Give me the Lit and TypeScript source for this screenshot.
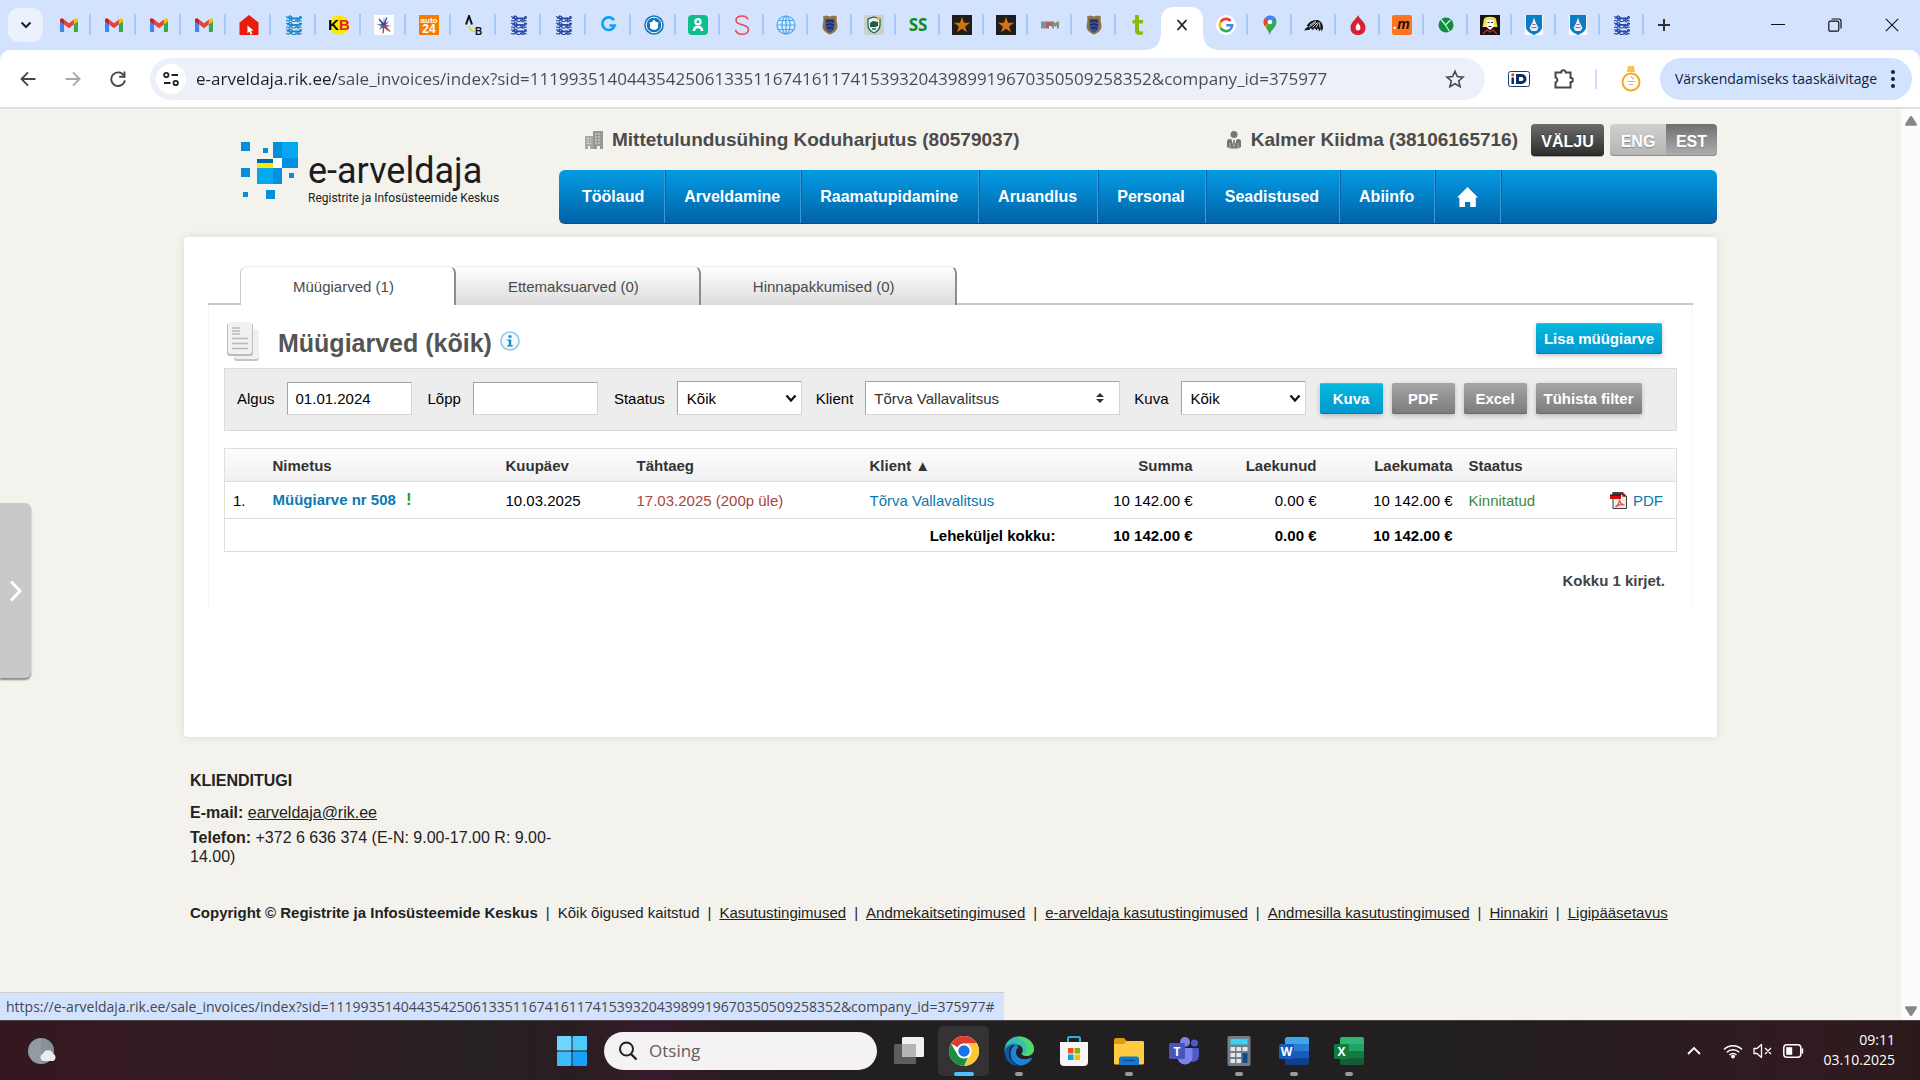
import { LitElement, html, svg, css, TemplateResult, SVGTemplateResult } from "lit";
import { customElement, state } from "lit/decorators.js";
import { classMap } from "lit/directives/class-map.js";

const SESSION_PATH =
  "e-arveldaja.rik.ee/sale_invoices/index?sid=1119935140443542506133511674161174153932043989919670350509258352&company_id=375977";

/* ---------- tab strip icons, all on a 20 x 20 grid ---------- */

const gmail = svg`
  <path d="M1 5v11.2c0 .5.4.8.9.8h3.2V8.6z" fill="#4285f4"/>
  <path d="M19 5v11.2c0 .5-.4.8-.9.8h-3.2V8.6z" fill="#34a853"/>
  <path d="M14.9 4.6v4.9L19 6.4V4.9c0-1.8-2-2.3-3.3-1z" fill="#fbbc04"/>
  <path d="M5.1 9.500V4.600L10 8.300l4.900-3.700v4.900L10 13.200z" fill="#ea4335"/>
  <path d="M1 4.900v1.500l4.100 3.100V4.600l-.8-.7C3 2.600 1 3.100 1 4.900z" fill="#c5221f"/>`;

const lion = (y: number, color: string) => svg`
  <path d="M2 ${y - 1}l2.500 1 1-1.500 2 .5.500 1.500h5l2 .5 1.500-2 1.500 1M3 ${y + 1}l3-.5 2 .8 4-.3 3 .5 2.500-1M2 ${y + 3}l3 .5 1.500-1.500 2 2h2.500l1-1.500 2 1.800 1.500-1.500 2 .5"
    fill="none" stroke="${color}" stroke-width="1.200"/>
  <path d="M5 ${y - 1}l1.500 3.500M8.500 ${y}l-1 2.500M13 ${y}l1 3M16 ${y - 1}l-1 3" stroke="${color}" stroke-width="1.200"/>`;
const lions = (color: string) => svg`${lion(2.5, color)}${lion(9, color)}${lion(15.5, color)}`;

const crest = svg`
  <path d="M3 1.500l3.500-1L10 1.500l3.500-1 3.500 1-.5 3.500 1 6c0 5-4 7-7.500 8.500C6.500 18 2.500 16 2.500 11l1-6z" fill="#8f7448"/>
  <path d="M5.500 4h9v8c0 3-2 4.500-4.500 5.500-2.500-1-4.500-2.500-4.500-5.500z" fill="#39518f"/>
  <path d="M6 6.500l4-1 4 1M6 10l4-1 4 1M7 13.500l3-1 3 1" stroke="#1d2c5c" stroke-width="1.400" fill="none"/>`;

const goldStar = svg`
  <rect width="20" height="20" fill="#1f1d1b"/>
  <path d="M10 2l2 5.800h6l-4.900 3.600 1.900 5.900-5-3.600-5 3.600 1.900-5.900L2 7.800h6z" fill="#d4720f"/>`;

const blueShield = svg`
  <rect x="1" width="18" height="20" fill="#fff"/>
  <path d="M2 0h16v12c0 4-4 6-8 8-4-2-8-4-8-8z" fill="#0a7cc4"/>
  <path d="M10 2.500l1.500 4.500 3 6-2 3h-5l-2-3 3-6z" fill="#e3eef5"/>
  <path d="M8.500 9.500h3M7.500 12.500h5" stroke="#b05c5c" stroke-width="1"/>`;

const favicons: { label: string; art: SVGTemplateResult }[] = [
  { label: "Gmail", art: gmail },
  { label: "Gmail", art: gmail },
  { label: "Gmail", art: gmail },
  { label: "Gmail", art: gmail },
  {
    label: "Kinnisvara",
    art: svg`<path d="M10 0l9.500 7.500V20H.5V7.500z" fill="#ea1c0a"/><path d="M8.500 10.500l6 5-2.600.3 1.500 3.200-1.600.8-1.500-3.300-1.800 1.800z" fill="#fff"/>`,
  },
  { label: "Riik", art: lions("#1687c8") },
  {
    label: "KB",
    art: svg`<circle cx="10" cy="10" r="9.800" fill="#ffe800"/><text x="-1" y="15" font-size="15" font-weight="700" font-family="Liberation Sans, sans-serif" fill="#000">K</text><text x="10" y="15" font-size="15" font-weight="700" font-family="Liberation Sans, sans-serif" fill="#e2231a">B</text>`,
  },
  {
    label: "Täht",
    art: svg`<rect width="20" height="20" fill="#fff"/><path d="M10 1.500l.8 7 4.200-2.500-3 4 5.500 1-5.500.8 2 4.700-3.700-3.800L9 18.500l-.3-6L5 15l2.300-4L2.500 9.500l5.300-.4L5 4.500l4.300 3.700z" fill="#5a5c86"/><path d="M5 4l5 6 2.800-7.500" fill="none" stroke="#1b3f90" stroke-width="1.200"/><path d="M10 10l-1 8.500M10 10l6 6.500" stroke="#c8344c" stroke-width="1.200"/>`,
  },
  {
    label: "auto24",
    art: svg`<rect width="20" height="20" fill="#f57c00"/><text x="10" y="7.500" font-size="8" font-weight="700" text-anchor="middle" font-family="Liberation Sans, sans-serif" fill="#fff">auto</text><text x="10" y="17.500" font-size="12" font-weight="700" text-anchor="middle" font-family="Liberation Sans, sans-serif" fill="#fff">24</text>`,
  },
  {
    label: "AB",
    art: svg`<path d="M2 9.500L5 1l3 8.500" fill="none" stroke="#111" stroke-width="2"/><path d="M5 11c1 4 3 5 6 5.500" fill="none" stroke="#d6dc2c" stroke-width="1.600"/><text x="11" y="19.500" font-size="10" font-weight="700" font-family="Liberation Sans, sans-serif" fill="#111">B</text>`,
  },
  { label: "Riik", art: lions("#2748a8") },
  { label: "Riik", art: lions("#2748a8") },
  {
    label: "G",
    art: svg`<path d="M15 5.300A6.300 6.300 0 1 0 15.700 10.500H10.500" fill="none" stroke="#12a0f2" stroke-width="2.600"/>`,
  },
  {
    label: "Teenus",
    art: svg`<circle cx="10" cy="10" r="9.800" fill="#1176bc"/><circle cx="10" cy="10" r="7.800" fill="none" stroke="#fff" stroke-width="1"/><path d="M10 4.500l1.800 2.200 2.700.8-.6 2.800.3 2.700-2.700 1.800h-3l-2.700-1.800.3-2.700-.6-2.800 2.700-.8z" fill="#fff"/>`,
  },
  {
    label: "Profiil",
    art: svg`<rect width="20" height="20" rx="4" fill="#0bbf8c"/><circle cx="10" cy="6.800" r="2.600" fill="none" stroke="#fff" stroke-width="2.200"/><path d="M6 16c0-2.600 1.700-4 4-4s4 1.400 4 4" fill="none" stroke="#fff" stroke-width="2.600"/>`,
  },
  {
    label: "S",
    art: svg`<path d="M16 4.500C15 2 12.500 1 10 1 6.500 1 4 2.800 4 5.500c0 5.500 12.500 3 12.500 9 0 3-3 4.700-6.500 4.700-3.200 0-5.800-1.500-6.500-4.200" fill="none" stroke="#f0434f" stroke-width="1.600"/>`,
  },
  {
    label: "Gloobus",
    art: svg`<circle cx="10" cy="10" r="9" fill="#d8edff"/><g fill="none" stroke="#4ea5ee" stroke-width="1.200"><circle cx="10" cy="10" r="9"/><ellipse cx="10" cy="10" rx="4" ry="9"/><path d="M10 1v18M1 10h18M2.500 5.500h15M2.500 14.500h15"/></g>`,
  },
  { label: "Politsei", art: crest },
  {
    label: "Kaitse",
    art: svg`<rect width="20" height="20" rx="2" fill="#cdcfcc"/><path d="M10 2l6 2v6c0 4-2.500 6.500-6 8-3.500-1.500-6-4-6-8V4z" fill="#e9f0ea" stroke="#1c6b4c" stroke-width="1.300"/><path d="M6 8l3-2 5 1v4l-3 1H6z" fill="#1d5b45"/><path d="M8 14h4" stroke="#1c6b4c" stroke-width="1.400"/><circle cx="14.500" cy="3.500" r="1.800" fill="#f4a742"/>`,
  },
  {
    label: "SS",
    art: svg`<text x="10" y="16" font-size="17" font-weight="700" text-anchor="middle" font-family="Open Sans, sans-serif" fill="#138a1e">SS</text>`,
  },
  { label: "Täht", art: goldStar },
  { label: "Täht", art: goldStar },
  {
    label: "EPM",
    art: svg`<path d="M1 6.500h5v7H1z" fill="#8d8d8d"/><path d="M6 6.500h6v4.500H9v2.500H6z" fill="#a8685e"/><path d="M12 6.500h2l1.500 2 1.500-2h2v7h-2v-3l-1.500 1.500-1.500-1.500v3h-2z" fill="#8f8a80"/>`,
  },
  { label: "Politsei", art: crest },
  {
    label: "t",
    art: svg`<path d="M7 0h4v5h4v3.500h-4V15c0 1.400 1 1.800 4 1.200V19.500c-4.500 1-8 .2-8-3.800V8.500H4.500V5H7z" fill="#8cb90c"/>`,
  },
  { label: "e-arveldaja", art: svg`<path d="M6 5.500l8 9M14 5.500l-8 9" stroke="#1f1f1f" stroke-width="1.800" stroke-linecap="round"/>` },
  {
    label: "Google",
    art: svg`<circle cx="10" cy="10" r="10" fill="#fff"/><path d="M14.600 5.800A6.200 6.200 0 0 0 4.700 7" fill="none" stroke="#ea4335" stroke-width="2.600"/><path d="M4.700 7a6.200 6.200 0 0 0 0 6" fill="none" stroke="#fbbc05" stroke-width="2.600"/><path d="M4.700 13a6.200 6.200 0 0 0 9.300 1.700" fill="none" stroke="#34a853" stroke-width="2.600"/><path d="M14 14.700a6.200 6.200 0 0 0 2.200-4.400H10.300" fill="none" stroke="#4285f4" stroke-width="2.600"/>`,
  },
  {
    label: "Google Maps",
    art: svg`<path d="M10 20c0-5-6.500-7-6.500-13A6.500 6.500 0 0 1 10 .5z" fill="#fbbc04"/><path d="M10 20c0-5 6.500-7 6.500-13A6.500 6.500 0 0 0 12 .8L6 12z" fill="#34a853"/><path d="M3.500 7A6.500 6.500 0 0 1 5 3l4 3.500-4 5C4 10 3.500 8.700 3.500 7z" fill="#ea4335"/><path d="M5 3A6.500 6.500 0 0 1 15.500 3.500L9.500 9z" fill="#4285f4"/><circle cx="10" cy="7" r="2.300" fill="#fff"/>`,
  },
  {
    label: "Tiib",
    art: svg`<path d="M0 15.500c1.500-2.500 3-3.500 5-4L2.500 11C5 6.500 9 4.500 13 5c4 .6 6 4 6 8.500l-1.500 3-.8-3-1 3-2-3.500-.7 2.500-2.500-2.500-1.500 2-2.500-2-1 1.800z" fill="#161616"/><path d="M5 12l7-4.500M8.500 12.500l5-5M12 12.500l2.500-5M16 12.500L15.500 7.500M6 10l6-4" stroke="#d3e3fd" stroke-width=".9"/>`,
  },
  {
    label: "Tilk",
    art: svg`<path d="M10 0c1 3.500 7.500 7 7.500 12.500S14 20 10 20s-7.500-2-7.500-7.500S9 3.500 10 0z" fill="#d71f36"/><path d="M10 7.500c.5 1.600 2.400 2.800 2.400 5.100S11.500 15.500 10 15.500s-2.400-.6-2.400-2.900S9.500 9.100 10 7.500z" fill="#fff"/>`,
  },
  {
    label: ".m",
    art: svg`<rect width="20" height="20" rx="2" fill="#ff7420"/><text x="9.500" y="14" font-size="14" font-weight="700" font-style="italic" text-anchor="middle" font-family="Liberation Sans, sans-serif" fill="#111"><tspan fill="#fff">.</tspan>m</text>`,
  },
  {
    label: "Roheline",
    art: svg`<circle cx="10" cy="10" r="7.500" fill="#0f8e3d"/><path d="M5 4.500l4.500 5.500 5-5M9.500 10l4 6.500" fill="none" stroke="#d3f0dc" stroke-width="1.300"/>`,
  },
  {
    label: "Portree",
    art: svg`<rect width="20" height="20" fill="#141414"/><path d="M4 4c1-3 11-3 12 0l1.500 8h-15z" fill="#f7dd4c"/><path d="M6.500 5h7v7l-3.500 3-3.500-3z" fill="#fff"/><path d="M7.500 7.500h2M11 7.500h2M8.500 11.500h3" stroke="#222" stroke-width="1"/><path d="M3 19l4-4 3 2 3-2 4 4" fill="none" stroke="#d81f26" stroke-width="1.200"/>`,
  },
  { label: "Linn", art: blueShield },
  { label: "Linn", art: blueShield },
  { label: "Riik", art: lions("#2748a8") },
];

/* ---------- taskbar icons, all on a 30 x 30 grid ---------- */

const officeIcon = (letter: string, tones: string[], plate: string) => svg`
  <path d="M8 1h20a2 2 0 0 1 2 2v5H6V3a2 2 0 0 1 2-2z" fill="${tones[0]}"/>
  <path d="M6 8h24v7H6z" fill="${tones[1]}"/><path d="M6 15h24v7H6z" fill="${tones[2]}"/>
  <path d="M6 22h24v5a2 2 0 0 1-2 2H8a2 2 0 0 1-2-2z" fill="${tones[3]}"/>
  <rect y="8" width="15" height="15" rx="1.500" fill="${plate}"/>
  <text x="7.500" y="20" font-size="12" font-weight="700" text-anchor="middle" font-family="Open Sans, sans-serif" fill="#fff">${letter}</text>`;

const apps: { label: string; mark: "none" | "dot" | "active"; art: SVGTemplateResult }[] = [
  {
    label: "Tegumivaade",
    mark: "none",
    art: svg`<rect x="0" y="8" width="22" height="20" rx="1.500" fill="#5d5d5d"/><rect x="8" y="1" width="22" height="20" rx="1.500" fill="#f1f1f1"/><path d="M8 8h14v13H8z" fill="#b5b5b5"/>`,
  },
  {
    label: "Google Chrome",
    mark: "active",
    art: svg`<circle cx="15" cy="15" r="15" fill="#fff"/><path d="M15 0a15 15 0 0 1 13 7.500H15a7.500 7.500 0 0 0-6.500 3.800L2 7.500A15 15 0 0 1 15 0z" fill="#e33b2e"/><path d="M28 7.500A15 15 0 0 1 15 30l6.500-11.300a7.500 7.500 0 0 0 0-7.500L19 7.500z" fill="#fcc934"/><path d="M15 30A15 15 0 0 1 2 7.500l6.500 11.200A7.500 7.500 0 0 0 15 22.500c1.500 0 3-.4 4.200-1.200z" fill="#1e8e3e"/><circle cx="15" cy="15" r="7.200" fill="#fff"/><circle cx="15" cy="15" r="5.700" fill="#1a73e8"/>`,
  },
  {
    label: "Microsoft Edge",
    mark: "dot",
    art: svg`<path d="M.5 13C1.500 5.500 7.500.5 15 .5c8.500 0 15 6 15 12.500 0 4.500-3.500 7-7.500 7-3 0-5-1.200-5-2.300 0-.8 1.300-1.300 1.300-3.700 0-3-3-5.500-7-5.500C6.500 8.500 2 10.500.5 13z" fill="#35c1b1"/><path d="M15 .5c8.500 0 15 6 15 12.500 0 4.500-3.500 7-7.500 7-2 0-3.600-.5-4.400-1.200C26 17 24 5 13 2z" fill="#5fdc5a" opacity=".75"/><path d="M.5 15c0-5 5-8 11-7.500-4 1.500-6.500 5-6.500 10 0 6 4.500 11 10.500 12.200C7 30.500.500 24 .5 15z" fill="#0c59a4"/><path d="M12 8.500c-4 2-5.500 5.500-5.500 9.500 0 6.500 5.500 11.500 11.500 11.500 4.500-.8 8-3.500 10-7 .3-.6-.2-1-.8-.7C20 25 12 22.500 12 16.500c0-2.500 1-4 2.500-5-.5-1.500-1.500-2.500-2.500-3z" fill="#1b84d8"/><path d="M.5 14C2 9 8 7 12 8.500 6 8 2 10.500.500 16z" fill="#2aa4e0"/>`,
  },
  {
    label: "Microsoft Store",
    mark: "none",
    art: svg`<path d="M9 7V2.500C9 1.500 9.500 1 10.500 1h9c1 0 1.500.5 1.500 1.500V7" fill="none" stroke="#22b2f0" stroke-width="2"/><path d="M1 6h28v20a4 4 0 0 1-4 4H5a4 4 0 0 1-4-4z" fill="#f6f6f6"/><path d="M9 12h5.500v5.500H9z" fill="#f25022"/><path d="M15.500 12H21v5.500h-5.500z" fill="#7fba00"/><path d="M9 18.500h5.500V24H9z" fill="#00a4ef"/><path d="M15.500 18.500H21V24h-5.500z" fill="#ffb900"/>`,
  },
  {
    label: "Failihaldur",
    mark: "dot",
    art: svg`<path d="M0 4c0-1 .8-2 2-2h8l3.500 4H20v8H0z" fill="#e29c09"/><path d="M0 8l10 0 3-3h15.500c.800 0 1.500.7 1.500 1.500V27c0 1-.8 1.500-1.500 1.500h-27C.7 28.500 0 28 0 27z" fill="#ffcb42"/><path d="M5 29v-6a2.500 2.500 0 0 1 2.500-2.500h15A2.500 2.500 0 0 1 25 23v6z" fill="#1377cf"/><path d="M9.500 24.500h11" stroke="#0b4f94" stroke-width="1.500"/>`,
  },
  {
    label: "Microsoft Teams",
    mark: "none",
    art: svg`<circle cx="16" cy="6" r="5" fill="#7b83eb"/><circle cx="25.500" cy="7" r="3.500" fill="#5059c9"/><path d="M20 12h8.500c.8 0 1.500.7 1.500 1.500V20a6 6 0 0 1-8 5.500z" fill="#5059c9"/><path d="M9 12h13c.800 0 1.500.7 1.500 1.500V21a7.500 7.500 0 0 1-15 0z" fill="#7b83eb"/><rect y="7" width="16" height="16" rx="1.500" fill="#4b53bc"/><text x="8" y="19.500" font-size="12" font-weight="700" text-anchor="middle" font-family="Open Sans, sans-serif" fill="#fff">T</text>`,
  },
  {
    label: "Kalkulaator",
    mark: "dot",
    art: svg`<rect x="3.500" y="0" width="23" height="30" rx="2" fill="#71808d"/><rect x="6.500" y="3" width="17" height="5.500" fill="#3fd0f5"/><g fill="#e3e7ea"><rect x="6.500" y="11" width="4.500" height="4"/><rect x="12.500" y="11" width="4.500" height="4"/><rect x="18.500" y="11" width="5" height="4"/><rect x="6.500" y="17" width="4.500" height="4"/><rect x="12.500" y="17" width="4.500" height="4"/><rect x="6.500" y="23" width="4.500" height="4"/><rect x="12.500" y="23" width="4.500" height="4"/></g><rect x="18.500" y="17" width="5" height="10" fill="#134a8c"/>`,
  },
  { label: "Word", mark: "dot", art: officeIcon("W", ["#41a5ee", "#2b7cd3", "#185abd", "#103f91"], "#185abd") },
  { label: "Excel", mark: "dot", art: officeIcon("X", ["#2fb574", "#21a366", "#107c41", "#185c37"], "#107c41") },
];

const menu = ["Töölaud", "Arveldamine", "Raamatupidamine", "Aruandlus", "Personal", "Seadistused", "Abiinfo"];

const tabs = [
  { name: "Müügiarved", count: 1 },
  { name: "Ettemaksuarved", count: 0 },
  { name: "Hinnapakkumised", count: 0 },
];

const footerLinks = [
  "Kasutustingimused",
  "Andmekaitsetingimused",
  "e-arveldaja kasutustingimused",
  "Andmesilla kasutustingimused",
  "Hinnakiri",
  "Ligipääsetavus",
];

const chevron = html`<svg class="chevron" viewBox="0 0 12 12" width="12" height="12" aria-hidden="true">
  <path d="M1.500 3.500L6 8.500l4.500-5" fill="none" stroke="#111" stroke-width="2.200" />
</svg>`;

@customElement("app-root")
export class AppRoot extends LitElement {
  @state() private activeTab = 0;

  static styles = css`
    :host {
      display: flex;
      flex-direction: column;
      min-height: 100vh;
      background: #f3f2ec;
      font-family: "Liberation Sans", Arial, sans-serif;
      font-size: 15px;
      color: #000;
    }
    * { box-sizing: border-box; }
    svg { display: block; }
    button, input, select { font: inherit; margin: 0; }
    button { border: 0; padding: 0; background: none; color: inherit; }

    /* browser frame */
    .strip {
      display: flex;
      align-items: center;
      height: 50px;
      background: #d3e3fd;
      padding-left: 8px;
    }
    .search-tabs {
      display: grid;
      place-items: center;
      width: 35px;
      height: 34px;
      margin-right: 3px;
      border-radius: 11px;
      background: #ebf2fe;
    }
    .tab {
      position: relative;
      display: grid;
      place-items: center;
      width: 44px;
      height: 50px;
    }
    .tab.wide { width: 45px; }
    .tab.split::after {
      content: "";
      position: absolute;
      right: 0;
      top: 14px;
      width: 2px;
      height: 21px;
      background: #a8c7fa;
    }
    .tab.current::before {
      content: "";
      position: absolute;
      inset: 7px 1px 0 1px;
      border-radius: 12px 12px 0 0;
      background: #fff;
    }
    .tab.current::after {
      content: "";
      position: absolute;
      bottom: 0;
      left: -13px;
      right: -13px;
      height: 14px;
      background:
        radial-gradient(circle at 0 0, transparent 13px, #fff 14px) left / 14px 14px no-repeat,
        radial-gradient(circle at 100% 0, transparent 13px, #fff 14px) right / 14px 14px no-repeat;
    }
    .tab svg { position: relative; z-index: 1; }
    .new-tab { width: 40px; display: grid; place-items: center; }
    .window-controls { display: flex; margin-left: auto; }
    .window-controls button { width: 57px; height: 50px; display: grid; place-items: center; }
    .toolbar-back { background: #d3e3fd; }
    .toolbar {
      display: flex;
      align-items: center;
      height: 59px;
      padding: 0 8px 0 13px;
      background: #fff;
      border-bottom: 2px solid #dfe1de;
      border-radius: 10px 10px 0 0;
    }
    .tool { width: 30px; height: 30px; margin-right: 15px; display: grid; place-items: center; }
    .omnibox {
      flex: 1;
      display: flex;
      align-items: center;
      height: 42px;
      margin: 0 23px 0 2px;
      padding: 0 20px 0 6px;
      border-radius: 21px;
      background: #ecf0f9;
    }
    .site-info {
      display: grid;
      place-items: center;
      width: 30px;
      height: 30px;
      border-radius: 50%;
      background: #fff;
      margin-right: 10px;
    }
    .url {
      flex: 1;
      min-width: 0;
      border: 0;
      padding: 0;
      outline: 0;
      font-family: "Open Sans", "Noto Sans", sans-serif;
      font-size: 17px;
      color: transparent;
      caret-color: #111;
      background: linear-gradient(90deg, #1f1f1f 141px, #474a50 141px);
      -webkit-background-clip: text;
      background-clip: text;
    }
    .ext { width: 22px; height: 26px; margin-right: 23px; display: grid; place-items: center; }
    .ext.avatar { margin-right: 18px; }
    .divider { width: 2px; height: 20px; background: #cfe0fc; margin: 0 23px 0 -3px; }
    .restart {
      display: flex;
      align-items: center;
      gap: 14px;
      height: 42px;
      padding: 0 17px 0 15px;
      border-radius: 21px;
      background: #d3e3fd;
      font-family: "Open Sans", "Noto Sans", sans-serif;
      font-size: 14px;
      color: #0b1f4d;
      white-space: nowrap;
    }

    /* page area */
    .view { position: relative; flex: 1; display: flex; }
    .page { flex: 1; min-width: 0; }
    .wrap { width: min(1533px, 100% - 80px); margin: 0 auto; }
    .scroll {
      width: 19px;
      display: flex;
      flex-direction: column;
      justify-content: space-between;
      align-items: center;
      padding: 7px 0 4px;
      background: #fcfcfc;
    }
    .drawer {
      position: absolute;
      left: 0;
      top: 394px;
      width: 31px;
      height: 175px;
      display: grid;
      place-items: center;
      background: #c9c9c9;
      border-radius: 0 6px 6px 0;
      box-shadow: 0 2px 2px #888;
    }
    .status {
      position: absolute;
      left: 0;
      bottom: 0;
      height: 28px;
      padding: 0 10px 0 6px;
      line-height: 28px;
      background: #d3e3fd;
      border-top: 1px solid #cfcfc8;
      font-family: "Open Sans", "Noto Sans", sans-serif;
      font-size: 14px;
      color: #45484e;
      white-space: nowrap;
    }

    .masthead { display: grid; grid-template-columns: 375px 1fr; padding: 15px 0 13px; }
    .logo { display: flex; gap: 9px; padding: 18px 0 0 57px; color: #1b1c22; text-decoration: none; }
    .logo-text { padding-top: 9px; font-family: Roboto, sans-serif; }
    .logo-name { font-size: 36px; line-height: 40px; }
    .logo-sub { font-size: 12px; line-height: 14px; white-space: nowrap; }
    .identity {
      display: flex;
      align-items: center;
      height: 32px;
      margin-bottom: 14px;
      padding-left: 26px;
      font-size: 19px;
      font-weight: 700;
      color: #4b4b4b;
      white-space: nowrap;
    }
    .identity svg { margin-right: 9px; }
    .person { display: flex; align-items: center; margin-left: auto; }
    .dark, .lang {
      height: 32px;
      padding-top: 3px;
      font-size: 16px;
      font-weight: 700;
      color: #fff;
      text-shadow: 0 -1px 0 rgba(0, 0, 0, 0.3);
    }
    .dark {
      width: 73px;
      margin: 0 6px 0 13px;
      border-radius: 4px;
      background: linear-gradient(#6c6c6c, #2c2c2c);
      box-shadow: inset 0 -1px 0 #222, 0 1px 0 #aaa;
    }
    .lang { width: 56px; border-radius: 4px 0 0 4px; background: linear-gradient(#d0d0d0, #b5b5b5); box-shadow: inset 0 -1px 0 #8e8e8e; text-shadow: 0 1px 1px #888; }
    .lang.on { width: 51px; border-radius: 0 4px 4px 0; background: linear-gradient(#6f6f6f, #b0b0b0); }
    .menu {
      display: flex;
      height: 54px;
      padding-left: 4px;
      border-radius: 6px;
      background: linear-gradient(#049ce4, #0262a8);
      border-bottom: 1px solid #3e4248;
      font-size: 16px;
      font-weight: 700;
      white-space: nowrap;
    }
    .menu a {
      display: grid;
      place-items: center;
      padding: 0 20px 0 19px;
      color: #fff;
      text-decoration: none;
      border-right: 1px solid #3c9bd8;
      box-shadow: 1px 0 0 #0a62a8;
    }
    .menu a.home { padding: 0 22px; }

    .card {
      min-height: 500px;
      padding: 29px 24px 0;
      background: #fff;
      border-radius: 4px;
      box-shadow: 0 0 8px rgba(0, 0, 0, 0.1);
    }
    .tabs { display: flex; }
    .tabs::before, .tabs::after {
      content: "";
      border-bottom: 2px solid #c9c9c9;
      flex: 1;
    }
    .tabs::before { flex: 0 0 32px; }
    .sheet-tab {
      height: 39px;
      padding: 0 60px 0 52px;
      color: #4a4a4a;
      background: linear-gradient(#fefefe, #dcdcdc);
      border-top: 1px solid #ececec;
      border-right: 2px solid #8d8d8d;
      border-radius: 0 7px 0 0;
    }
    .sheet-tab.open { background: #fff; border-left: 1px solid #c9c9c9; border-radius: 7px 7px 0 0; }
    .sheet { min-height: 304px; padding: 13px 15px 0; border: solid #f6f6f6; border-width: 0 1px; }
    .title { display: flex; align-items: center; height: 50px; }
    .title h1 { margin: 0 8px 0 18px; font-size: 25px; line-height: 32px; color: #545454; }
    .title .info { margin-top: -5px; }
    .btn {
      height: 31px;
      min-width: 63px;
      padding: 0 8px;
      border-radius: 2px;
      font-weight: 700;
      color: #fff;
      background: linear-gradient(#a6a6a6, #7b7b7d);
      box-shadow: inset 0 -1px 0 #6b6b6c, 0 2px 5px rgba(0, 0, 0, 0.22);
      white-space: nowrap;
    }
    .btn.blue {
      background: linear-gradient(#04b9de, #0296cf);
      box-shadow: inset 0 1px 0 #19cdea, inset 0 -1px 0 #027dad, 0 2px 5px rgba(0, 0, 0, 0.22);
    }
    .title .btn { margin: 0 15px 9px auto; }
    .filter {
      display: flex;
      align-items: center;
      height: 63px;
      padding: 0 12px 3px;
      background: #ededed;
      border: 1px solid #dcdcdc;
    }
    .filter label { margin-right: 12px; }
    .field {
      width: 125px;
      height: 33px;
      margin-right: 16px;
      padding: 0 8px;
      background: #fff;
      border: 1px solid;
      border-color: #a5a5a5 #d6d6d6 #d6d6d6 #a5a5a5;
      border-radius: 0;
      color: #000;
      outline: 0;
    }
    .drop { display: grid; align-items: center; margin-right: 14px; }
    .drop > * { grid-area: 1 / 1; }
    .drop .field { height: 34px; margin: 0; padding: 0 9px; appearance: none; }
    .drop .wide { width: 255px; padding: 0 8px; color: #333; }
    .drop svg { justify-self: end; margin-right: 5px; pointer-events: none; }
    .drop .updown { margin-right: 16px; }
    .actions { display: flex; gap: 9px; padding-top: 1px; }

    table {
      width: 100%;
      margin-top: 17px;
      border-collapse: collapse;
      table-layout: fixed;
      border: 1px solid #dedede;
    }
    tr { height: 33px; border-bottom: 1px solid #dedede; }
    tbody tr { height: 37px; }
    thead tr { background: linear-gradient(#fdfdfd, #f0f0f0); color: #333; }
    th, td { padding: 0 8px; text-align: left; white-space: nowrap; }
    .num { text-align: right; }
    tfoot td { font-weight: 700; }
    td a { color: #0a7aae; text-decoration: none; }
    td a.invoice { font-weight: 700; }
    .mark { color: #1f9e2f; font-weight: 700; font-size: 17px; margin-left: 6px; }
    .late { color: #a94442; }
    .ok { color: #3a8a3c; }
    .pdf { display: flex; justify-content: flex-end; align-items: center; gap: 6px; padding-right: 5px; }
    .c-no { width: 40px; }
    .c-name { width: 233px; }
    .c-date { width: 131px; }
    .c-client { width: 202px; }
    .c-sum { width: 137px; }
    .c-paid { width: 124px; }
    .c-due { width: 136px; }
    .count { margin: 20px 12px 0; text-align: right; font-weight: 700; line-height: 18px; color: #444; }

    .foot { padding: 34px 6px 0; color: #222; font-size: 16px; }
    .foot a { color: inherit; }
    .support { width: 370px; line-height: 19px; }
    .support h2 { margin: 0 0 12px; font-size: 16px; line-height: 20px; }
    .support p { margin: 0 0 6px; }
    .legal { display: flex; gap: 8px; margin: 38px 0 0; font-size: 15px; line-height: 18px; white-space: nowrap; }

    /* taskbar */
    .taskbar {
      display: grid;
      grid-template-columns: 1fr auto 1fr;
      align-items: center;
      height: 60px;
      border-top: 1px solid #4a4547;
      background: linear-gradient(90deg, #35181f 0%, #331a21 12%, #262020 25%, #2a1d22 30%, #371a2a 34%, #2a1c22 38%, #211f20 46%, #211f20 75%, #281c20 84%, #321a20 94%, #2b1a1c 100%);
      color: #fff;
      font-family: "Open Sans", "Noto Sans", sans-serif;
    }
    .weather { padding-left: 27px; }
    .dock { display: flex; align-items: center; }
    .app {
      position: relative;
      display: grid;
      place-items: center;
      width: 55px;
      height: 50px;
    }
    .app.active::before {
      content: "";
      position: absolute;
      inset: 0 2px;
      border-radius: 5px;
      background: #343233;
    }
    .app svg { position: relative; }
    .app.dot::after, .app.active::after {
      content: "";
      position: absolute;
      bottom: 0;
      width: 8px;
      height: 4px;
      border-radius: 2px;
      background: #9b9a9a;
    }
    .app.active::after { width: 20px; background: #4cc2ff; }
    .find {
      display: flex;
      align-items: center;
      gap: 11px;
      width: 273px;
      height: 38px;
      margin: 0 4px 0 5px;
      padding: 0 14px;
      border-radius: 19px;
      background: #f4f2f3;
    }
    .find input { flex: 1; min-width: 0; border: 0; padding: 0; background: none; outline: 0; font-size: 17px; }
    .find input::placeholder { color: #5f5d5e; opacity: 1; }
    .tray { display: flex; align-items: center; justify-content: flex-end; gap: 10px; padding-right: 25px; }
    .tray .more { margin-right: 12px; }
    .clock { margin-left: 10px; padding-bottom: 2px; text-align: right; font-size: 14px; line-height: 20px; }
  `;

  private fav(art: SVGTemplateResult): TemplateResult {
    return html`<svg viewBox="0 0 20 20" width="20" height="20" aria-hidden="true">${art}</svg>`;
  }

  private renderBrowser(): TemplateResult {
    const current = favicons.findIndex((f) => f.label === "e-arveldaja");
    return html`
      <div class="strip">
        <button class="search-tabs" aria-label="Otsi vahekaarte">
          <svg viewBox="0 0 12 12" width="12" height="12"><path d="M1.500 3.500L6 8l4.500-4.500" fill="none" stroke="#1f1f1f" stroke-width="2" /></svg>
        </button>
        ${favicons.map(
          (f, i) => html`<button
            class=${classMap({ tab: true, wide: i < 14, current: i === current, split: i !== current && i !== current - 1 })}
            aria-label=${f.label}
          >${this.fav(f.art)}</button>`
        )}
        <button class="new-tab" aria-label="Uus vaheleht">
          <svg viewBox="0 0 14 14" width="14" height="14"><path d="M7 1v12M1 7h12" stroke="#333" stroke-width="2" /></svg>
        </button>
        <div class="window-controls">
          <button aria-label="Minimeeri"><svg viewBox="0 0 14 14" width="14" height="14"><path d="M0 6.500h14" stroke="#111" /></svg></button>
          <button aria-label="Taasta">
            <svg viewBox="0 0 14 14" width="14" height="14"><g fill="none" stroke="#111" stroke-width="1.200"><rect x=".8" y="3.200" width="10" height="10" rx="1.500" /><path d="M3.500 1h7.300c1.300 0 2.200.9 2.200 2.200v7.300" /></g></svg>
          </button>
          <button aria-label="Sulge"><svg viewBox="0 0 14 14" width="14" height="14"><path d="M.8.8l12.400 12.400M13.200.8L.8 13.200" stroke="#111" stroke-width="1.100" /></svg></button>
        </div>
      </div>
      <div class="toolbar-back">
        <div class="toolbar">
          <button class="tool" aria-label="Tagasi"><svg viewBox="0 0 16 16" width="16" height="16"><path d="M15.500 8H1.500M8 1.300L1.500 8 8 14.700" fill="none" stroke="#474747" stroke-width="1.900" /></svg></button>
          <button class="tool" aria-label="Edasi"><svg viewBox="0 0 16 16" width="16" height="16"><path d="M.5 8h14M8 1.300L14.500 8 8 14.700" fill="none" stroke="#a9a9a9" stroke-width="1.900" /></svg></button>
          <button class="tool" aria-label="Laadi uuesti"><svg viewBox="0 0 16 16" width="16" height="16"><path d="M13.800 4.500A6.800 6.800 0 1 0 14.800 9.300" fill="none" stroke="#474747" stroke-width="1.900" /><path d="M14.500 .5v5.300H9.200" fill="none" stroke="#474747" stroke-width="1.900" /></svg></button>
          <div class="omnibox">
            <button class="site-info" aria-label="Saidi teave">
              <svg viewBox="0 0 16 16" width="16" height="16"><g fill="none" stroke="#222" stroke-width="1.800"><circle cx="3.300" cy="4" r="2.200" /><path d="M8.500 4H15M1 12h6.500" /><circle cx="12.700" cy="12" r="2.200" /></g></svg>
            </button>
            <input class="url" type="text" aria-label="Aadressiriba" .value=${SESSION_PATH} />
            <button aria-label="Lisa järjehoidja">
              <svg viewBox="0 0 20 20" width="20" height="20"><path d="M10 2.200l2.300 5.400 5.900.5-4.500 3.900 1.400 5.700-5.100-3-5.100 3 1.400-5.700L1.800 8.100l5.900-.5z" fill="none" stroke="#474747" stroke-width="1.600" /></svg>
            </button>
          </div>
          <button class="ext" aria-label="ID laiendus">
            <svg viewBox="0 0 22 16" width="22" height="16"><rect x=".5" y=".5" width="21" height="15" rx="2" fill="#fff" stroke="#1b3e72" /><path d="M3.500 6.500H6V13H3.500z" fill="#0d2f63" /><circle cx="4.800" cy="3.800" r="1.600" fill="#e8452c" /><path d="M9.500 4.500h4a3.500 3.500 0 0 1 0 7h-4z" fill="none" stroke="#0d2f63" stroke-width="3" /></svg>
          </button>
          <button class="ext" aria-label="Laiendused">
            <svg viewBox="0 0 22 22" width="22" height="22"><path d="M2.500 4.500h5.700a2.300 2.300 0 0 1 4.600 0h4.700V9.700a2.300 2.300 0 0 1 0 4.600v5.200h-15v-5a2.600 2.600 0 0 0 0-5z" fill="none" stroke="#474747" stroke-width="2" /></svg>
          </button>
          <div class="divider"></div>
          <button class="ext avatar" aria-label="Profiil">
            <svg viewBox="0 0 22 26" width="22" height="26"><path d="M8 0h6l1 6H7z" fill="#fcc24c" /><circle cx="11" cy="16" r="8.500" fill="#fffdf6" stroke="#f3a91f" stroke-width="2" /><path d="M11 10l1 2h2l-1.500 1.500M7.500 15.500h7M9 18.500h4" stroke="#c9b48c" stroke-width="1" fill="none" /></svg>
          </button>
          <button class="restart">
            Värskendamiseks taaskäivitage
            <svg viewBox="0 0 4 18" width="4" height="18"><g fill="#0b1f4d"><circle cx="2" cy="2" r="2" /><circle cx="2" cy="9" r="2" /><circle cx="2" cy="16" r="2" /></g></svg>
          </button>
        </div>
      </div>
    `;
  }

  private renderHeader(): TemplateResult {
    return html`
      <header class="masthead">
        <a class="logo" href="#">
          <svg viewBox="0 0 58 57" width="58" height="57" aria-hidden="true">
            <g fill="#028fdb">
              <rect x="0" y="0" width="9" height="9" /><rect x="22" y="6" width="5" height="5" />
              <rect x="32" y="0" width="10" height="16" /><rect x="41" y="16" width="16" height="10" />
              <rect x="0" y="26" width="9" height="9" /><rect x="32" y="26" width="9" height="16" />
              <rect x="48" y="31" width="5" height="5" /><rect x="2" y="50" width="5" height="5" />
              <rect x="25" y="48" width="9" height="9" />
            </g>
            <rect x="41" y="0" width="16" height="16" fill="#03a8f0" />
            <rect x="16" y="26" width="16" height="16" fill="#03a8f0" />
            <rect x="16" y="17" width="16" height="4" fill="#0065b3" />
            <rect x="16" y="21" width="16" height="5" fill="#ffe600" />
            <rect x="32" y="16" width="9" height="10" fill="#fff" />
          </svg>
          <div class="logo-text">
            <div class="logo-name">e-arveldaja</div>
            <div class="logo-sub">Registrite ja Infosüsteemide Keskus</div>
          </div>
        </a>
        <div>
          <div class="identity">
            <svg viewBox="0 0 18 18" width="18" height="18" aria-hidden="true">
              <path d="M0 5h8v13H0z" fill="#a8a8a8" /><path d="M8 0h10v18H8z" fill="#979797" />
              <path d="M2 7.500h4M2 10h4M2 12.500h4M10 3h6M10 6h6M10 9h6M10 12h6" stroke="#e0dfda" stroke-dasharray="2 1" />
              <path d="M3 15h2v3H3zM12 15h3v3h-3z" fill="#f3f2ec" />
            </svg>
            <span>Mittetulundusühing Koduharjutus (80579037)</span>
            <span class="person">
              <svg viewBox="0 0 16 18" width="16" height="18" aria-hidden="true">
                <circle cx="8" cy="3.500" r="3.500" fill="#777" />
                <path d="M1 10.500C1 8.800 2.500 8 4 8h1.200L8 16.500 10.800 8H12c1.500 0 3 .8 3 2.500V16l-3 1.500H4L1 16z" fill="#747474" />
                <path d="M7.200 8.800h1.600L9.200 13 8 15.500 6.800 13z" fill="#8a8a8a" /><path d="M4 12v5M12 12v5" stroke="#ccc" stroke-width=".8" />
              </svg>
              <span>Kalmer Kiidma (38106165716)</span>
            </span>
            <button class="dark">VÄLJU</button>
            <button class="lang">ENG</button><button class="lang on">EST</button>
          </div>
          <nav class="menu">
            ${menu.map((m) => html`<a href="#">${m}</a>`)}
            <a class="home" href="#" aria-label="Avaleht">
              <svg viewBox="0 0 21 20" width="21" height="20"><path d="M10.500 0L21 10.500h-2.200V20h-5.600v-5H8v5H2.400v-9.500H0z" fill="#fff" /></svg>
            </a>
          </nav>
        </div>
      </header>
    `;
  }

  private renderFilter(): TemplateResult {
    return html`
      <form class="filter" @submit=${(e: Event) => e.preventDefault()}>
        <label for="start">Algus</label><input id="start" class="field" type="text" value="01.01.2024" />
        <label for="end">Lõpp</label><input id="end" class="field" type="text" />
        <label for="status">Staatus</label>
        <span class="drop"><select id="status" class="field"><option>Kõik</option></select>${chevron}</span>
        <label for="client">Klient</label>
        <span class="drop">
          <select id="client" class="field wide"><option>Tõrva Vallavalitsus</option></select>
          <svg class="updown" viewBox="0 0 8 10" width="8" height="10" aria-hidden="true"><path d="M4 0l4 4H0zM4 10l4-4H0z" fill="#333" /></svg>
        </span>
        <label for="show">Kuva</label>
        <span class="drop"><select id="show" class="field"><option>Kõik</option></select>${chevron}</span>
        <span class="actions">
          <button class="btn blue" type="submit">Kuva</button>
          <button class="btn" type="button">PDF</button>
          <button class="btn" type="button">Excel</button>
          <button class="btn" type="reset">Tühista filter</button>
        </span>
      </form>
    `;
  }

  private renderTable(): TemplateResult {
    return html`
      <table>
        <colgroup>
          <col class="c-no" /><col class="c-name" /><col class="c-date" /><col class="c-name" /><col class="c-client" />
          <col class="c-sum" /><col class="c-paid" /><col class="c-due" /><col /><col />
        </colgroup>
        <thead>
          <tr>
            <th></th><th>Nimetus</th><th>Kuupäev</th><th>Tähtaeg</th><th>Klient ▲</th>
            <th class="num">Summa</th><th class="num">Laekunud</th><th class="num">Laekumata</th><th>Staatus</th><th></th>
          </tr>
        </thead>
        <tbody>
          <tr>
            <td>1.</td>
            <td><a class="invoice" href="#">Müügiarve nr 508</a> <span class="mark">!</span></td>
            <td>10.03.2025</td>
            <td class="late">17.03.2025 (200p üle)</td>
            <td><a href="#">Tõrva Vallavalitsus</a></td>
            <td class="num">10 142.00 €</td><td class="num">0.00 €</td><td class="num">10 142.00 €</td>
            <td class="ok">Kinnitatud</td>
            <td>
              <a class="pdf" href="#">
                <svg viewBox="0 0 17 17" width="17" height="17" aria-hidden="true">
                  <path d="M3 .5h9.500l4 4v12H3z" fill="#eee" stroke="#3a3a3a" /><path d="M2.500 0h10l4.500 4.500h-4.500V3h-10z" fill="#444" />
                  <path d="M12.500 0L17 4.500h-4.500z" fill="#b21212" /><rect y="3" width="11" height="4" fill="#d40b0b" /><rect y="2.500" width="11" height="1" fill="#400" />
                  <path d="M5.500 15c2-1.500 4-4.500 4-7.500 0 3 2 5 5 5.500-3-.8-6-.3-9 2z" fill="none" stroke="#e54848" stroke-width="1.200" />
                </svg>
                PDF
              </a>
            </td>
          </tr>
        </tbody>
        <tfoot>
          <tr>
            <td class="num" colspan="5">Leheküljel kokku:</td>
            <td class="num">10 142.00 €</td><td class="num">0.00 €</td><td class="num">10 142.00 €</td><td colspan="2"></td>
          </tr>
        </tfoot>
      </table>
      <p class="count">Kokku 1 kirjet.</p>
    `;
  }

  private renderCard(): TemplateResult {
    return html`
      <main class="card">
        <div class="tabs" role="tablist">
          ${tabs.map(
            (t, i) => html`<button
              role="tab"
              aria-selected=${i === this.activeTab ? "true" : "false"}
              class=${classMap({ "sheet-tab": true, open: i === this.activeTab })}
              @click=${() => (this.activeTab = i)}
            >${t.name} (${t.count})</button>`
          )}
        </div>
        <section class="sheet">
          <div class="title">
            <svg viewBox="0 0 36 42" width="36" height="42" aria-hidden="true">
              <rect x="10" y="8" width="25" height="31" rx="3" fill="#c4c4c4" /><rect x="10" y="7" width="25" height="30" rx="3" fill="#f0f0f0" />
              <rect x="3" y="1" width="26" height="33" rx="3" fill="#bdbdbd" /><rect x="4" y="0" width="24" height="32" rx="3" fill="#f1f1f1" />
              <path d="M8 6h8M8 9h8M8 12h8M8 16.500h16M8 21.500h16M8 26.500h16" stroke="#b9b9b9" stroke-width="1.600" />
            </svg>
            <h1>Müügiarved (kõik)</h1>
            <svg class="info" viewBox="0 0 20 20" width="20" height="20" aria-hidden="true">
              <circle cx="10" cy="10" r="9" fill="#f3fafe" stroke="#8ecbea" stroke-width="1.600" />
              <circle cx="10" cy="5.500" r="1.600" fill="#1b8cc9" /><path d="M7.500 8.500h3.700v5.500h1.500v1.500H7.300V14h1.500v-4H7.500z" fill="#1b8cc9" />
            </svg>
            <button class="btn blue">Lisa müügiarve</button>
          </div>
          ${this.renderFilter()} ${this.renderTable()}
        </section>
      </main>
    `;
  }

  private renderFooter(): TemplateResult {
    return html`
      <footer class="foot">
        <div class="support">
          <h2>KLIENDITUGI</h2>
          <p><b>E-mail:</b> <a href="mailto:earveldaja@rik.ee">earveldaja@rik.ee</a></p>
          <p><b>Telefon:</b> <span>+372 6 636 374 (E-N: 9.00-17.00 R: 9.00-</span><wbr /><span>14.00)</span></p>
        </div>
        <p class="legal">
          <b>Copyright © Registrite ja Infosüsteemide Keskus</b><span>|</span><span>Kõik õigused kaitstud</span>
          ${footerLinks.map((l) => html`<span>|</span><a href="#">${l}</a>`)}
        </p>
      </footer>
    `;
  }

  private renderTaskbar(): TemplateResult {
    return html`
      <div class="taskbar">
        <div class="weather">
          <svg viewBox="0 0 30 28" width="30" height="28" role="img" aria-label="Ilm">
            <circle cx="14" cy="14" r="13" fill="#929aa4" /><path d="M14 1a13 13 0 0 1 0 26z" fill="#7d868f" opacity=".5" />
            <path d="M16 24a4 4 0 0 1 0-7.500 5.500 5.500 0 0 1 10 0A4 4 0 0 1 26 24z" fill="#e8ecef" />
          </svg>
        </div>
        <div class="dock">
          <button class="app" aria-label="Start">
            <svg viewBox="0 0 30 30" width="30" height="30">
              <rect width="14.500" height="14.500" rx="1" fill="#6fd6fc" /><rect x="15.500" width="14.500" height="14.500" rx="1" fill="#4ccafb" />
              <rect y="15.500" width="14.500" height="14.500" rx="1" fill="#3cbcfa" /><rect x="15.500" y="15.500" width="14.500" height="14.500" rx="1" fill="#16a2f8" />
            </svg>
          </button>
          <label class="find">
            <svg viewBox="0 0 20 20" width="20" height="20" aria-hidden="true"><circle cx="8.500" cy="8" r="6.500" fill="none" stroke="#222" stroke-width="2" /><path d="M13 13l5.500 5.500" stroke="#222" stroke-width="2.400" /></svg>
            <input type="search" placeholder="Otsing" aria-label="Otsing" />
          </label>
          ${apps.map(
            (a) => html`<button class=${classMap({ app: true, dot: a.mark === "dot", active: a.mark === "active" })} aria-label=${a.label}>
              <svg viewBox="0 0 30 30" width="30" height="30">${a.art}</svg>
            </button>`
          )}
        </div>
        <div class="tray">
          <svg class="more" viewBox="0 0 14 10" width="14" height="10"><path d="M1 8l6-6 6 6" fill="none" stroke="#fff" stroke-width="1.800" /></svg>
          <svg viewBox="0 0 20 16" width="20" height="16"><g fill="none" stroke="#fff" stroke-width="1.500"><path d="M1 6.500a12.500 12.500 0 0 1 18 0M3.800 9.300a8.700 8.700 0 0 1 12.400 0M6.500 12a5 5 0 0 1 7 0" /></g><circle cx="10" cy="13.500" r="1.900" fill="#fff" /></svg>
          <svg viewBox="0 0 20 16" width="20" height="16"><path d="M1 5.500h3L8.500 1.500v13L4 10.500H1zM12 5l6 6M18 5l-6 6" fill="none" stroke="#fff" stroke-width="1.300" stroke-linejoin="round" /></svg>
          <svg viewBox="0 0 21 14" width="21" height="14"><rect x=".8" y=".8" width="17" height="12.400" rx="3" fill="none" stroke="#fff" stroke-width="1.500" /><rect x="3.200" y="3.200" width="6" height="7.600" fill="#fff" /><path d="M18.500 4.500h1.700v5h-1.700z" fill="#fff" /></svg>
          <div class="clock"><div>09:11</div><div>03.10.2025</div></div>
        </div>
      </div>
    `;
  }

  render(): TemplateResult {
    return html`
      ${this.renderBrowser()}
      <div class="view">
        <div class="page">
          <div class="wrap">${this.renderHeader()} ${this.renderCard()} ${this.renderFooter()}</div>
        </div>
        <div class="scroll">
          <svg viewBox="0 0 12 10" width="12" height="10"><path d="M6 0c.6 0 1 .3 1.400.9l4.300 6.800c.5 1 0 2.100-1 2.100H1.300c-1 0-1.500-1.100-1-2.100L4.600.9C5 .3 5.400 0 6 0z" fill="#878787" /></svg>
          <svg viewBox="0 0 12 10" width="12" height="10"><path d="M6 10c.6 0 1-.3 1.400-.9l4.300-6.800c.5-1 0-2.100-1-2.100H1.300c-1 0-1.500 1.100-1 2.100l4.300 6.800c.4.6.8.9 1.400.9z" fill="#878787" /></svg>
        </div>
        <button class="drawer" aria-label="Ava külgpaneel">
          <svg viewBox="0 0 14 22" width="14" height="22"><path d="M2 1.500l9 9.500-9 9.500" fill="none" stroke="#fff" stroke-width="3" /></svg>
        </button>
        <div class="status">https://${SESSION_PATH}#</div>
      </div>
      ${this.renderTaskbar()}
    `;
  }
}
